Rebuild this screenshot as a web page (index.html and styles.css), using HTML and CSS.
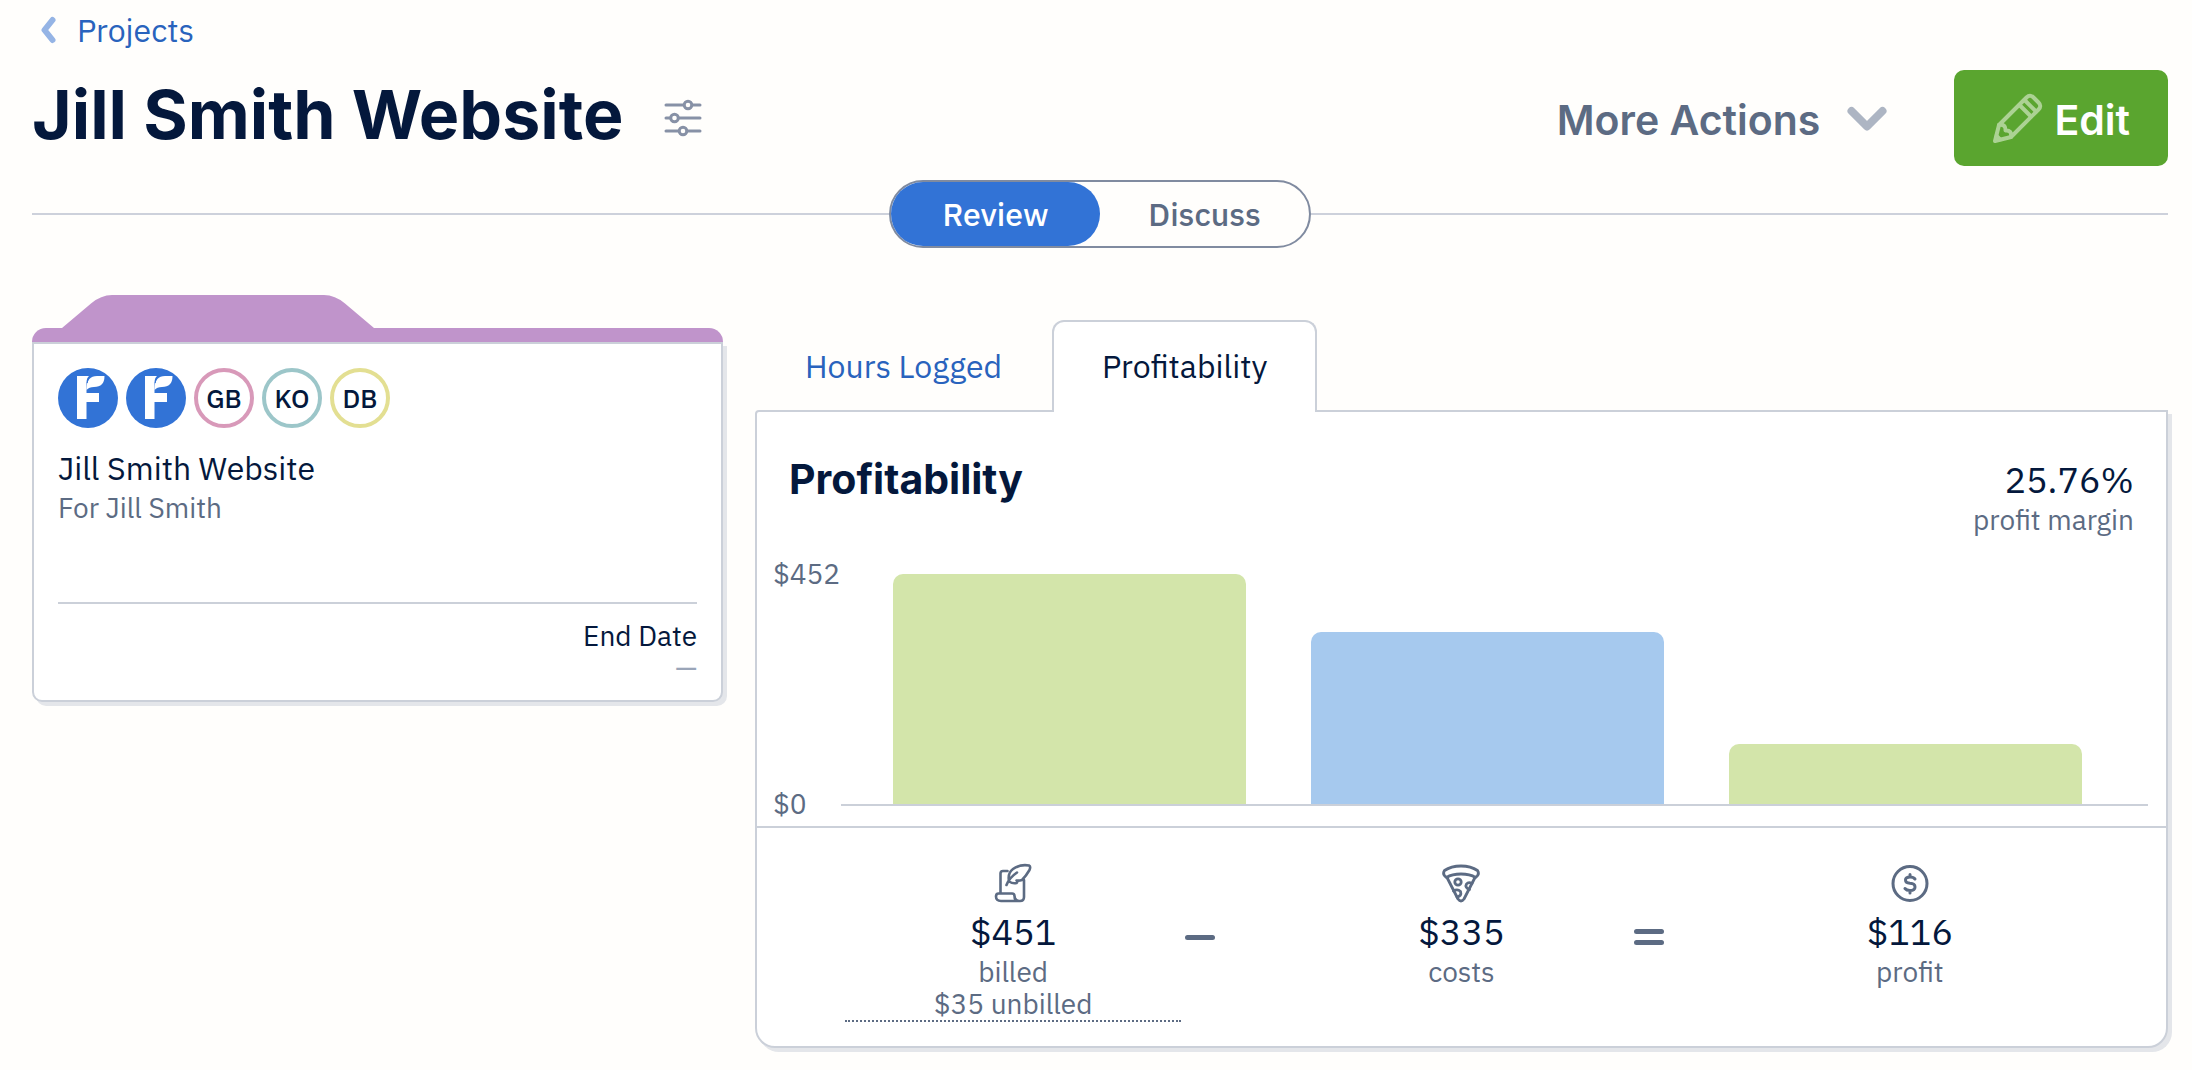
FILE: index.html
```html
<!DOCTYPE html>
<html lang="en">
<head>
<meta charset="utf-8">
<meta name="viewport" content="width=device-width, initial-scale=1">
<title>Jill Smith Website</title>
<link rel="stylesheet" href="styles.css">
</head>
<body>
<svg class="symbols" width="0" height="0" aria-hidden="true">
  <symbol id="leaf-logo" viewBox="0 0 60 60">
    <path d="M19 8H31Q28.500 10 28.500 15V25H41V34H28.500V51H19Z" fill="#fff"/>
    <path d="M28.500 20Q29 8 39 8H46.500Q46.500 19 36 19Q31 19 28.500 22Z" fill="#fff"/>
    <path d="M29.200 15Q29.200 10.500 32.500 8" fill="none" stroke="#3273d6" stroke-width="1"/>
  </symbol>
</svg>
<div class="page">
  <nav class="crumbs">
    <a class="back" href="#">
      <svg width="18" height="28" viewBox="0 0 18 28" fill="none" stroke="#95b4e5" stroke-width="6" stroke-linecap="round" stroke-linejoin="round" aria-hidden="true"><path d="M13.500 4L5.500 14L13.500 24"/></svg>
      Projects
    </a>
  </nav>

  <header class="header">
    <h1 class="title">Jill Smith Website</h1>
    <button class="settings" type="button" aria-label="Project settings">
      <svg width="40" height="40" viewBox="0 0 40 40" fill="none" stroke="#8791a6" stroke-width="3" stroke-linecap="round" aria-hidden="true">
        <path d="M3 7H20.500M29.500 7H37M3 20H7M16 20H37M3 33H15.500M24.500 33H37"/>
        <circle cx="25" cy="7" r="3.800"/><circle cx="11.500" cy="20" r="3.800"/><circle cx="20" cy="33" r="3.800"/>
      </svg>
    </button>
    <button class="more" type="button">
      <span class="caption">More Actions</span>
      <svg width="42" height="26" viewBox="0 0 42 26" fill="none" stroke="#adb5c3" stroke-width="8" stroke-linecap="round" stroke-linejoin="round" aria-hidden="true"><path d="M5.500 6L21 21.500L36.500 6"/></svg>
    </button>
    <button class="edit" type="button">
      <svg width="52" height="52" viewBox="0 0 52 52" fill="none" stroke="#acd294" stroke-width="4" stroke-linejoin="round" stroke-linecap="round" aria-hidden="true">
        <path d="M3 49L7 33L34.500 5.500Q38 2 41.500 5.500L46.500 10.500Q50 14 46.500 17.500L19 45Z"/>
        <path d="M7 33Q14 32 13.500 38.500Q20 38 19 45M27.500 13L39 24.500M32.500 8L44 19.500"/>
        <path d="M4 42L10 48L3 49Z" fill="#acd294" stroke-width="2"/>
      </svg>
      <span class="caption">Edit</span>
    </button>
  </header>

  <div class="switch-row">
    <div class="switch" role="tablist" aria-label="View">
      <button class="switch-item is-on" type="button" role="tab" aria-selected="true">Review</button>
      <button class="switch-item" type="button" role="tab" aria-selected="false">Discuss</button>
    </div>
  </div>

  <main class="content">
    <section class="folder">
      <svg class="folder-tab" width="312" height="33" viewBox="0 0 312 33" aria-hidden="true"><path d="M0 33L29 8.500Q39 0 50 0H262Q273 0 283 8.500L312 33Z" fill="#c094cb"/></svg>
      <div class="folder-bar"></div>
      <div class="folder-body">
        <ul class="people">
          <li class="avatar avatar-logo"><svg width="60" height="60" role="img" aria-label="Company"><use href="#leaf-logo"/></svg></li>
          <li class="avatar avatar-logo"><svg width="60" height="60" role="img" aria-label="Company"><use href="#leaf-logo"/></svg></li>
          <li class="avatar avatar-pink">GB</li>
          <li class="avatar avatar-teal">KO</li>
          <li class="avatar avatar-yellow">DB</li>
        </ul>
        <h2 class="project-name">Jill Smith Website</h2>
        <p class="client">For Jill Smith</p>
        <div class="end-date">
          <p>End Date</p>
          <p class="empty">—</p>
        </div>
      </div>
    </section>

    <section class="report">
      <div class="tabs" role="tablist" aria-label="Reports">
        <button class="tab" type="button" role="tab" aria-selected="false">Hours Logged</button>
        <button class="tab is-active" type="button" role="tab" aria-selected="true">Profitability</button>
      </div>
      <div class="panel">
        <div class="panel-head">
          <h2 class="panel-title">Profitability</h2>
          <div class="margin">
            <p class="amount">25.76%</p>
            <p class="label">profit margin</p>
          </div>
        </div>
        <div class="chart">
          <div class="axis"><span>$452</span><span>$0</span></div>
          <div class="plot">
            <div class="bar bar-green" style="height:100%"></div>
            <div class="bar bar-blue" style="height:75%"></div>
            <div class="bar bar-green" style="height:26%"></div>
          </div>
        </div>
        <div class="sums">
          <div class="sum">
            <svg width="40" height="40" viewBox="0 0 40 40" fill="none" stroke="#5c6b83" stroke-width="2.600" stroke-linecap="round" stroke-linejoin="round" aria-hidden="true">
              <path d="M14.500 8H10Q7.500 8 7.500 10.500V30M31 17V34Q31 38 27 38H8Q3 38 3 33.500Q3 30.500 5.500 30.500H19Q21.500 30.500 21.500 33Q21.500 38 26 38"/>
              <path d="M13.500 22Q16 15 24 9.500M16 18Q14.500 10 20 6Q27 1 36 2.500Q38 3.500 36.500 7Q33 13 29 17Q26 18 23.500 17.500Q25 18.500 23.500 20Q20 21 16 18.500"/>
            </svg>
            <p class="amount">$451</p>
            <p class="label">billed</p>
            <p class="label detail">$35 unbilled</p>
          </div>
          <div class="sign" role="img" aria-label="minus"><i></i></div>
          <div class="sum">
            <svg width="40" height="40" viewBox="0 0 40 40" fill="none" stroke="#5c6b83" stroke-width="2.800" stroke-linecap="round" stroke-linejoin="round" aria-hidden="true">
              <path d="M5.500 14.500Q1 11.500 3.500 7.500Q10 3 20 3Q30 3 36.500 7.500Q39 11.500 34.500 14.500Q29 11 20 11Q11 11 5.500 14.500ZM6 14.500L17 36Q20 40 23 36L34 14.500"/>
              <circle cx="17" cy="19" r="3.200"/><path d="M31 20.500Q27.500 18.500 25.500 21Q23.500 24.500 28.500 26.500M12.500 28Q16.500 25.500 19.500 28.500Q21 33 16 34"/>
            </svg>
            <p class="amount">$335</p>
            <p class="label">costs</p>
          </div>
          <div class="sign" role="img" aria-label="equals"><i></i><i></i></div>
          <div class="sum">
            <svg width="40" height="40" viewBox="0 0 40 40" fill="none" stroke="#5c6b83" stroke-width="3" stroke-linecap="round" aria-hidden="true">
              <circle cx="20" cy="20.500" r="17"/>
              <path d="M25 16Q23.500 14 20 14Q15.500 14 15.500 17Q15.500 20 20 20.300Q25 20.500 25 24Q25 27.500 20 27.500Q16.500 27.500 15 25.500M20 11.500V13.500M20 28V30"/>
            </svg>
            <p class="amount">$116</p>
            <p class="label">profit</p>
          </div>
        </div>
      </div>
    </section>
  </main>
</div>
</body>
</html>
```
FILE: styles.css
```css
* { box-sizing: border-box; }

body {
  margin: 0;
  background: #fffefc;
  color: #04183c;
  font-family: "IBM Plex Sans", Roboto, "Liberation Sans", sans-serif;
  font-size: 32px;
  line-height: 40px;
}

h1, h2, p, ul { margin: 0; padding: 0; }

button {
  padding: 0;
  border: 0;
  background: none;
  color: inherit;
  font: inherit;
  cursor: pointer;
}

svg { display: block; flex: none; }
.symbols { position: absolute; }

.page { padding: 10px 24px 22px 32px; }

.crumbs { display: flex; }
.back {
  display: flex;
  align-items: center;
  gap: 20px;
  padding-left: 7px;
  color: #2963bd;
  text-decoration: none;
}

.header {
  display: flex;
  align-items: center;
  margin-top: 20px;
}
.title, .panel-title, .more, .edit {
  font-family: Inter, "Liberation Sans", sans-serif;
  font-weight: 600;
}
.title {
  padding-bottom: 8px;
  font-size: 68px;
  font-weight: 700;
  line-height: 84px;
}
.settings { margin-left: 40px; }
.caption { padding-top: 4px; }
.more {
  display: flex;
  align-items: center;
  gap: 26px;
  margin-left: auto;
  color: #5c6b83;
  font-size: 41px;
}
.edit {
  display: flex;
  align-items: center;
  gap: 10px;
  height: 96px;
  margin-left: 66px;
  padding: 0 38px;
  border-radius: 10px;
  background: #5aa52f;
  color: #fff;
  font-size: 41px;
}

.switch-row {
  display: flex;
  align-items: center;
  margin-top: 14px;
}
.switch-row::before, .switch-row::after {
  content: "";
  flex: 1;
  height: 2px;
  background: #cdd1db;
}
.switch {
  display: grid;
  grid-template-columns: 1fr 1fr;
  width: 422px;
  height: 68px;
  border: 2px solid #808ba0;
  border-radius: 34px;
}
.switch-item {
  border-radius: 32px;
  color: #5c6b83;
  font-weight: 500;
}
.switch-item.is-on { background: #3273d6; color: #fff; }

.content {
  display: grid;
  grid-template-columns: minmax(0, 691fr) minmax(0, 1413fr);
  gap: 32px;
  align-items: start;
  margin-top: 47px;
}

.folder-tab { margin-left: 30px; }
.folder-bar {
  height: 14px;
  border-radius: 18px 18px 0 0;
  background: #c094cb;
}
.folder-body {
  padding: 24px 24px 16px;
  border: 2px solid #cbd0d9;
  border-radius: 0 0 10px 10px;
  background: #fff;
  box-shadow: 4px 4px #e4e6ea;
}
.people {
  display: flex;
  gap: 8px;
  list-style: none;
}
.avatar {
  display: flex;
  align-items: center;
  justify-content: center;
  width: 60px;
  height: 60px;
  border: 4px solid;
  border-radius: 50%;
  background: #fff;
  color: #04183c;
  font-size: 26px;
  font-weight: 500;
}
.avatar-logo { border: 0; background: #3273d6; }
.avatar-pink { border-color: #d899b9; }
.avatar-teal { border-color: #9cc6c9; }
.avatar-yellow { border-color: #e3df92; }

.project-name { margin-top: 20px; font-size: 32px; font-weight: 400; }
.client, .label, .end-date, .axis { font-size: 28px; }
.client { color: #5c6b83; }
.end-date {
  margin-top: 74px;
  padding-top: 16px;
  border-top: 2px solid #cbd0d9;
  line-height: 32px;
  text-align: right;
}
.empty { color: #9aa5b8; }

.report { padding-top: 25px; }
.tabs { display: flex; }
.tab {
  height: 92px;
  margin-bottom: -2px;
  padding: 0 50px;
  border-radius: 12px 12px 0 0;
  color: #2963bd;
}
.tab.is-active {
  z-index: 1;
  padding: 0 48px 2px;
  border: 2px solid #cbd0d9;
  border-bottom: 0;
  background: #fff;
  color: #04183c;
}
.panel {
  border: 2px solid #cbd0d9;
  border-radius: 4px 0 20px 20px;
  background: #fff;
  box-shadow: 4px 4px #e4e6ea;
}
.panel-head {
  display: flex;
  justify-content: space-between;
  padding: 48px 32px 0;
}
.panel-title { font-size: 41px; font-weight: 700; line-height: 38px; }
.amount { font-size: 36px; }
.label { color: #5c6b83; }
.margin { text-align: right; }

.chart {
  display: flex;
  padding: 34px 18px 20px 16px;
}
.axis {
  display: flex;
  flex-direction: column;
  justify-content: space-between;
  width: 68px;
  margin: -20px 0 -18px;
  color: #5c6b83;
}
.plot {
  display: grid;
  flex: 1;
  grid-template-columns: repeat(3, 1fr);
  gap: 65px;
  align-items: end;
  height: 232px;
  padding: 0 66px 0 52px;
  border-bottom: 2px solid #cbd0d9;
}
.bar { border-radius: 10px 10px 0 0; }
.bar-green { background: #d3e5aa; }
.bar-blue { background: #a6c9ee; }

.sums {
  display: grid;
  grid-template-columns: 3fr 1fr 3fr 1fr 3fr;
  padding: 35px 88px 24px;
  border-top: 2px solid #cbd0d9;
}
.sum {
  display: flex;
  flex-direction: column;
  align-items: center;
}
.sum .amount { margin: 7px 0 2px; line-height: 44px; }
.sum .label { line-height: 32px; }
.detail {
  align-self: stretch;
  border-bottom: 2px dotted #5c6b83;
  text-align: center;
}
.sign {
  display: flex;
  flex-direction: column;
  justify-content: center;
  gap: 6px;
  height: 28px;
  margin: 60px 0 0 4px;
}
.sign i {
  width: 30px;
  height: 5px;
  border-radius: 3px;
  background: #5c6b83;
}
```
